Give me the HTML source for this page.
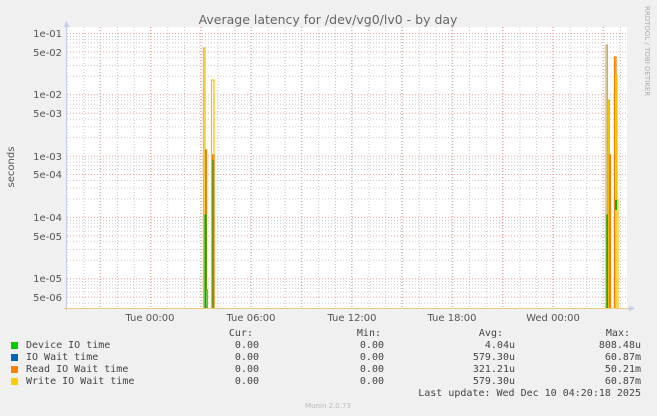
<!DOCTYPE html>
<html><head><style>
body{margin:0;background:#f0f0f0;width:657px;height:416px;overflow:hidden;font-family:"DejaVu Sans","Liberation Sans",sans-serif}
svg{position:absolute;left:0;top:0}
.m{font-family:"DejaVu Sans Mono","Liberation Mono",monospace;font-size:10px;fill:#444}
</style></head><body>
<svg width="657" height="416" viewBox="0 0 657 416">
<defs>
<pattern id="vg" x="66.6" y="0" width="16.77" height="400" patternUnits="userSpaceOnUse"><line x1="0.5" y1="0" x2="0.5" y2="400" stroke="#c4c4c4" stroke-dasharray="1,2"/></pattern>
<pattern id="vr" x="99.6" y="0" width="50.3" height="400" patternUnits="userSpaceOnUse"><line x1="0.5" y1="0" x2="0.5" y2="400" stroke="#eea0a0" stroke-dasharray="1,2"/></pattern>
<clipPath id="pc"><rect x="67" y="27" width="560" height="281"/></clipPath>
</defs>
<rect x="67" y="27" width="560" height="281" fill="#fff"/>
<g clip-path="url(#pc)">
<rect x="67" y="27" width="560" height="281" fill="url(#vg)"/>
<g stroke="#cfcfcf" stroke-dasharray="1,2">
<path d="M67 36.3H627M67 39.45H627M67 43H627M67 47.1H627M67 57.9H627M67 65.55H627M67 76.35H627
M67 97.6H627M67 100.75H627M67 104.3H627M67 108.4H627M67 119.2H627M67 126.85H627M67 137.65H627
M67 158.9H627M67 162.05H627M67 165.6H627M67 169.7H627M67 180.5H627M67 188.15H627M67 198.95H627
M67 220.2H627M67 223.35H627M67 226.9H627M67 231H627M67 241.8H627M67 249.45H627M67 260.25H627
M67 281.5H627M67 284.65H627M67 288.2H627M67 292.3H627M67 303.1H627"/>
</g>
<rect x="67" y="27" width="560" height="281" fill="url(#vr)"/>
<g stroke="#eea0a0" stroke-dasharray="1,2">
<path d="M67 33.5H627M67 51.95H627M67 94.8H627M67 113.25H627M67 156.1H627M67 174.55H627M67 217.4H627M67 235.85H627M67 278.7H627M67 297.15H627"/>
</g>
<g fill="none" stroke-width="1.2">
<path d="M203.5 308V48H205V308" stroke="#f5c000"/>
<path d="M205.5 308V150H206.5V290H207.5V308" stroke="#f08000"/>
<path d="M205 308V215H206V308" stroke="#00b000"/>
<path d="M211.5 308V80H214V308" stroke="#f5c000"/>
<path d="M212.5 308V155H214V308" stroke="#f08000"/>
<path d="M213 308V160" stroke="#30a030"/>
<path d="M606 308V45H607.5V308" stroke="#c8b060"/>
<path d="M607 308V215H608V308" stroke="#00b000"/>
<path d="M608.5 308V100H609.5V308" stroke="#f5c000"/>
<path d="M609.5 308V155H610.5V308" stroke="#f08000"/>
<path d="M614.5 308V57H616V308" stroke="#f08000"/>
<path d="M616 308V75H617V200H618V308" stroke="#f5c000"/>
<path d="M616 210V200" stroke="#00b000" stroke-width="2"/>
</g>
</g>
<line x1="66.5" y1="24" x2="66.5" y2="310" stroke="#c8ccee"/>
<path d="M63.5 27L66.5 21L69.5 27Z" fill="#c8ccee"/>
<line x1="64" y1="308.5" x2="630" y2="308.5" stroke="#e6cc80"/>
<path d="M629 305.5L635 308.5L629 311.5Z" fill="#c8ccee"/>
<g font-size="10" fill="#555" text-anchor="end">
<text x="62" y="37">1e-01</text><text x="62" y="56">5e-02</text>
<text x="62" y="98">1e-02</text><text x="62" y="117">5e-03</text>
<text x="62" y="160">1e-03</text><text x="62" y="178">5e-04</text>
<text x="62" y="221">1e-04</text><text x="62" y="240">5e-05</text>
<text x="62" y="282">1e-05</text><text x="62" y="301">5e-06</text>
</g>
<g font-size="10" fill="#555" text-anchor="middle">
<text x="150" y="321">Tue 00:00</text><text x="251" y="321">Tue 06:00</text>
<text x="352" y="321">Tue 12:00</text><text x="452" y="321">Tue 18:00</text>
<text x="553" y="321">Wed 00:00</text>
</g>
<text x="14" y="167" font-size="10" fill="#555" text-anchor="middle" transform="rotate(-90 14 167)">seconds</text>
<text x="328" y="24" font-size="12.5" fill="#666" text-anchor="middle">Average latency for /dev/vg0/lv0 - by day</text>
<text x="645" y="6" font-size="7" fill="#aaa" transform="rotate(90 645 6)">RRDTOOL / TOBI OETIKER</text>
<text class="m" x="253" y="336" text-anchor="end">Cur:</text>
<text class="m" x="381" y="336" text-anchor="end">Min:</text>
<text class="m" x="503" y="336" text-anchor="end">Avg:</text>
<text class="m" x="630" y="336" text-anchor="end">Max:</text>
<rect x="11" y="342" width="7" height="7" fill="#00cc00"/>
<rect x="11" y="354" width="7" height="7" fill="#0066b3"/>
<rect x="11" y="366" width="7" height="7" fill="#ff8000"/>
<rect x="11" y="378" width="7" height="7" fill="#ffcc00"/>
<text class="m" x="26" y="348">Device IO time</text>
<text class="m" x="26" y="360">IO Wait time</text>
<text class="m" x="26" y="372">Read IO Wait time</text>
<text class="m" x="26" y="384">Write IO Wait time</text>
<g class="m" text-anchor="end">
<text class="m" x="259" y="348">0.00</text><text class="m" x="384" y="348">0.00</text><text class="m" x="515" y="348">4.04u</text><text class="m" x="641" y="348">808.48u</text>
<text class="m" x="259" y="360">0.00</text><text class="m" x="384" y="360">0.00</text><text class="m" x="515" y="360">579.30u</text><text class="m" x="641" y="360">60.87m</text>
<text class="m" x="259" y="372">0.00</text><text class="m" x="384" y="372">0.00</text><text class="m" x="515" y="372">321.21u</text><text class="m" x="641" y="372">50.21m</text>
<text class="m" x="259" y="384">0.00</text><text class="m" x="384" y="384">0.00</text><text class="m" x="515" y="384">579.30u</text><text class="m" x="641" y="384">60.87m</text>
<text class="m" x="641" y="396">Last update: Wed Dec 10 04:20:18 2025</text>
</g>
<text x="328" y="408" font-size="7" fill="#bbb" text-anchor="middle">Munin 2.0.73</text>
</svg>
</body></html>
